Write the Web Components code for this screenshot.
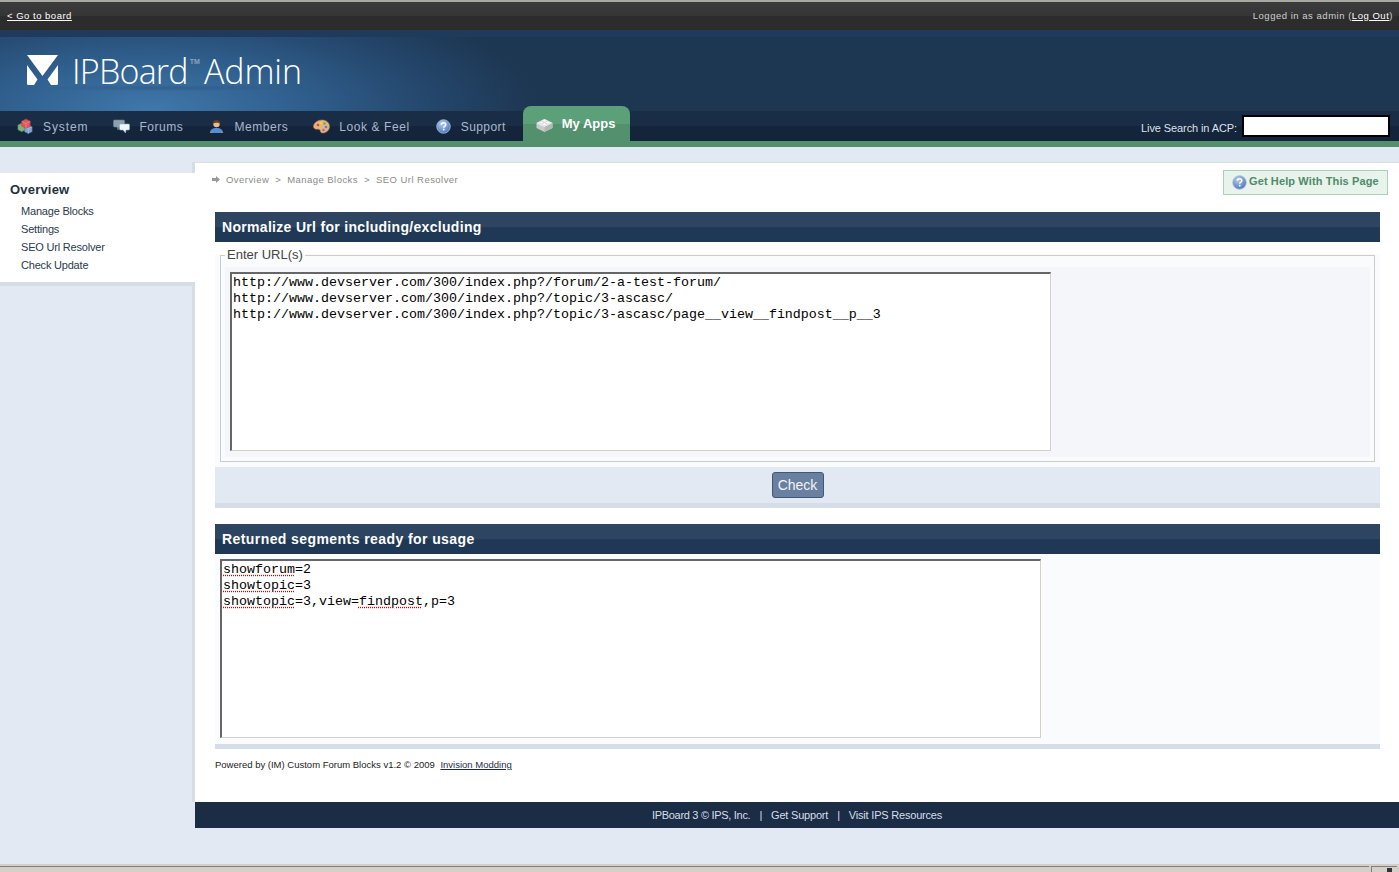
<!DOCTYPE html>
<html>
<head>
<meta charset="utf-8">
<title>IPBoard Admin</title>
<style>
  html, body { margin: 0; height: 100%; overflow: hidden; }
  body { background: #e3e9f2; font-family: "Liberation Sans", Arial, sans-serif; }
  acp-page { height: 872px; }
</style>
</head>
<body>
<acp-page>
  <acp-topbar slot="top"></acp-topbar>
  <acp-banner slot="top"></acp-banner>
  <acp-nav slot="top"></acp-nav>

  <acp-sidebar slot="side" heading="Overview">
    <a href="#">Manage Blocks</a>
    <a href="#">Settings</a>
    <a href="#">SEO Url Resolver</a>
    <a href="#">Check Update</a>
  </acp-sidebar>

  <acp-crumbs slot="main"></acp-crumbs>

  <acp-section slot="main" heading="Normalize Url for including/excluding" first>
    <acp-fieldset legend="Enter URL(s)">
      <acp-box>http://www.devserver.com/300/index.php?/forum/2-a-test-forum/
http://www.devserver.com/300/index.php?/topic/3-ascasc/
http://www.devserver.com/300/index.php?/topic/3-ascasc/page__view__findpost__p__3</acp-box>
    </acp-fieldset>
    <acp-submit label="Check"></acp-submit>
  </acp-section>

  <acp-section slot="main" heading="Returned segments ready for usage">
    <acp-results>
      <acp-box><u>showforum</u>=2
<u>showtopic</u>=3
<u>showtopic</u>=3,view=<u>findpost</u>,p=3</acp-box>
    </acp-results>
  </acp-section>

  <acp-powered slot="main"></acp-powered>
  <acp-footer slot="foot"></acp-footer>
  <acp-statusbar slot="bottom"></acp-statusbar>
</acp-page>

<script>
// small helper so every element does the same shadow setup
function define(name, html, setup) {
  customElements.define(name, class extends HTMLElement {
    connectedCallback() {
      if (this.shadowRoot) return;
      this.attachShadow({ mode: 'open' });
      this.shadowRoot.innerHTML = typeof html === 'function' ? html(this) : html;
      if (setup) setup(this);
    }
  });
}

const ICONS = {
  system: `<svg width="18" height="16" viewBox="0 0 18 16">
    <path d="M1 7l4-2 4 2v5l-4 2-4-2z" fill="#7fb07f" stroke="#5b8a5c" stroke-width=".6"/>
    <path d="M8 9l4-2 4 2v5l-4 2-4-2z" fill="#7ea6cc" stroke="#56789c" stroke-width=".6"/>
    <path d="M8 9l4 2 4-2M12 11v5" fill="none" stroke="#a9c6e2" stroke-width=".6"/>
    <path d="M5 3l4.500-2.500 4.500 2.500v5l-4.500 2.500-4.500-2.500z" fill="#e2555a" stroke="#b83c42" stroke-width=".6"/>
    <path d="M5 3l4.500 2.500 4.500-2.500M9.500 5.500v5" fill="none" stroke="#f4a0a0" stroke-width=".6"/>
  </svg>`,
  forums: `<svg width="17" height="15" viewBox="0 0 17 15">
    <path d="M1.500 1h9a1 1 0 0 1 1 1v5a1 1 0 0 1-1 1H6l-1 3-1-3H1.500a1 1 0 0 1-1-1V2a1 1 0 0 1 1-1z" fill="#8e9fb0" stroke="#6c7d8e" stroke-width=".6"/>
    <path d="M7.500 5h8a1 1 0 0 1 1 1v4a1 1 0 0 1-1 1H13l-.5 3-2.500-3H7.500a1 1 0 0 1-1-1V6a1 1 0 0 1 1-1z" fill="#eef5fb" stroke="#8fb0cf" stroke-width=".6"/>
  </svg>`,
  members: `<svg width="15" height="15" viewBox="0 0 15 15">
    <path d="M1 14c0-3.500 2.500-5 6.500-5s6.500 1.500 6.500 5z" fill="#4e8fdc"/>
    <path d="M.5 14h3v-2zM14.500 14h-3v-2z" fill="#c9824a"/>
    <circle cx="7.500" cy="5" r="3.200" fill="#edbb8e"/>
    <path d="M4 4.500C4 1.500 6 1 7.500 1S11 1.800 11 4.500C9.500 3.500 6 3.300 4 4.500z" fill="#6b3f1d"/>
  </svg>`,
  palette: `<svg width="17" height="15" viewBox="0 0 17 15">
    <path d="M9 1c4 0 7.500 2.500 7.500 6.500S13 14 9.500 14c-2 0-2-1.500-2.500-3-.4-1-2-.8-3.500-.8C2 10.200.5 9.500.5 7.500.5 4 4.500 1 9 1z" fill="#e8b27c" stroke="#b47a45" stroke-width=".6"/>
    <circle cx="5" cy="6" r="1.300" fill="#d9473f"/>
    <circle cx="8" cy="4" r="1.300" fill="#f0d040"/>
    <circle cx="11.500" cy="4.500" r="1.300" fill="#5ab55a"/>
    <circle cx="13" cy="8" r="1.300" fill="#4a86d8"/>
    <circle cx="10.500" cy="11" r="1.300" fill="#a765c0"/>
  </svg>`,
  help: `<svg width="15" height="15" viewBox="0 0 15 15">
    <defs><radialGradient id="h" cx=".4" cy=".3" r=".8"><stop offset="0" stop-color="#b6cdf0"/><stop offset="1" stop-color="#3f6fb5"/></radialGradient></defs>
    <circle cx="7.500" cy="7.500" r="6.800" fill="url(#h)" stroke="#a9bedd" stroke-width=".8"/>
    <path d="M5.300 5.800c0-1.300 1-2 2.300-2s2.200.8 2.200 1.900c0 1.500-2 1.500-2 3" fill="none" stroke="#fff" stroke-width="1.500"/>
    <rect x="6.900" y="9.800" width="1.600" height="1.600" fill="#fff"/>
  </svg>`,
  brick: `<svg width="17" height="15" viewBox="0 0 17 15">
    <path d="M.5 6l8-4 8 4v5l-8 4-8-4z" fill="#c9cdca"/>
    <path d="M.5 6l8 4 8-4-8-4z" fill="#f1f2f1"/>
    <path d="M8.500 10v5l8-4V6z" fill="#b3b8b5"/>
    <ellipse cx="5.500" cy="5.500" rx="2" ry="1.200" fill="#fff" stroke="#bbb" stroke-width=".4"/>
    <ellipse cx="11.500" cy="5.500" rx="2" ry="1.200" fill="#fff" stroke="#bbb" stroke-width=".4"/>
    <ellipse cx="8.500" cy="3.800" rx="2" ry="1.200" fill="#fff" stroke="#bbb" stroke-width=".4"/>
    <ellipse cx="8.500" cy="7.200" rx="2" ry="1.200" fill="#fff" stroke="#bbb" stroke-width=".4"/>
  </svg>`
};

define('acp-page', `
  <style>
    :host { display: flex; flex-direction: column; }
    .row { display: flex; align-items: flex-start; padding-top: 15px; }
    .side { flex: 0 0 195px; }
    .right { flex: 1; min-width: 0; }
    .main { background: #fff; border-top: 1px solid #d5dde5; height: 640px; box-sizing: border-box; padding: 0 19px 0 20px; }
    .bottom { margin-top: auto; }
  </style>
  <slot name="top"></slot>
  <div class="row">
    <div class="side"><slot name="side"></slot></div>
    <div class="right">
      <div class="main"><slot name="main"></slot></div>
      <slot name="foot"></slot>
    </div>
  </div>
  <div class="bottom"><slot name="bottom"></slot></div>
`);

define('acp-topbar', `
  <style>
    :host { display: flex; justify-content: space-between; align-items: center;
      padding: 0 6px 2px 7px; height: 26px; border-top: 2px solid #a9a9a4;
      background: linear-gradient(#3b3b3b, #353535 50%, #2c2c2c 52%, #2c2c2c);
      font-size: 9.500px; color: #cfcfcf; }
    a { color: #fff; }
    .back { letter-spacing: .5px; }
    span { letter-spacing: .52px; }
  </style>
  <a class="back" href="#">&lt; Go to board</a>
  <span>Logged in as admin (<a href="#">Log Out</a>)</span>
`);

define('acp-banner', `
  <style>
    :host { display: flex; align-items: flex-start; box-sizing: border-box; height: 81px;
      border-top: 7px solid #1f3b5b; padding: 18px 0 0 27px;
      background: radial-gradient(ellipse 130px 3px at 165px 51px, rgba(20,45,80,.22), transparent),
        radial-gradient(ellipse 390px 130px at 150px 72px, #3f78ab 0%, #2f5e8c 40%, #25486e 70%, #1d3651 100%), #1d3651; }
    svg { flex: none; }
    .word { font-family: "Open Sans", sans-serif; font-weight: 300; font-size: 34px; line-height: 32px;
      color: #fff; margin-left: 14px; white-space: nowrap; letter-spacing: -.2px; }
    .ip { letter-spacing: -.77px; }
    .tm { font-size: 7px; color: #8ea5bd; vertical-align: 20px; letter-spacing: 0; margin: 0 4px 0 2px; font-family: "Liberation Sans", sans-serif; font-weight: 700; line-height: 0; }
    .ad { letter-spacing: -.1px; }
  </style>
  <svg width="31" height="30" viewBox="0 0 31 30">
    <path d="M0 0h31L15.500 21z" fill="#fff"/>
    <path d="M0 10l10.500 14.500L7 30H1.500Q0 30 0 28.500zM31 10L20.500 24.500 24 30h5.500Q31 30 31 28.500z" fill="#fff"/>
  </svg>
  <div class="word"><span class="ip">IPBoard</span><span class="tm">TM</span><span class="ad">Admin</span></div>
`);

define('acp-nav-item', host => `
  <style>
    :host { display: flex; align-items: center; gap: 9px; color: #a9b9cd; font-size: 12px;
      letter-spacing: var(--ls, .6px); white-space: nowrap; height: 30px; }
    .tx { padding-top: 1px; }
    :host([active]) { height: 35px; margin-top: -5px; padding: 0 15px 0 13px; gap: 9px;
      border-radius: 8px 8px 0 0; color: #fff; font-weight: 700; font-size: 13px; letter-spacing: 0;
      background: linear-gradient(#5ba078, #5ba078 50%, #53906e 52%, #53906e); align-items: flex-start; }
    :host([active]) .ic { margin-top: 11px; }
    :host([active]) .tx { margin-top: 10px; padding-top: 0; }
    .ic { display: flex; width: 17px; justify-content: center; }
  </style>
  <span class="ic">${ICONS[host.getAttribute('icon')]}</span><span class="tx"><slot></slot></span>
`);

define('acp-nav', `
  <style>
    :host { display: flex; align-items: center; height: 36px; box-sizing: border-box; border-bottom: 6px solid #53906e;
      padding: 0 9px 0 17px; background: linear-gradient(#1a2d46, #1a2d46 50%, #14243a 52%, #14243a); }
    .items { display: flex; gap: 25px; }
    .search { margin-left: auto; display: flex; align-items: center; gap: 5px; color: #dbe3ec; font-size: 11px; letter-spacing: -.1px; margin-top: 2px; }
    .search span { padding-top: 2px; }
    .input { width: 144px; height: 18px; background: #fff; border: 2px solid #000; margin-top: -2px; }
    .act { margin-left: -8px; }
  </style>
  <div class="items">
    <acp-nav-item icon="system" style="--ls:.9px">System</acp-nav-item>
    <acp-nav-item icon="forums" style="--ls:.55px">Forums</acp-nav-item>
    <acp-nav-item icon="members" style="--ls:.55px">Members</acp-nav-item>
    <acp-nav-item icon="palette" style="--ls:.58px">Look &amp; Feel</acp-nav-item>
    <acp-nav-item icon="help" style="--ls:.42px">Support</acp-nav-item>
    <acp-nav-item icon="brick" active class="act">My Apps</acp-nav-item>
  </div>
  <div class="search"><span>Live Search in ACP:</span><div class="input"></div></div>
`);

define('acp-sidebar', host => `
  <style>
    :host { display: block; height: 640px; padding-top: 11px; box-sizing: border-box;
      background: linear-gradient(to right, transparent 192px, #d5dde5 192px) no-repeat; }
    .box { background: #fff; border-bottom: 4px solid #d5dde5; height: 113px; box-sizing: border-box; }
    h3 { margin: 0; padding: 9px 0 0 10px; font-size: 13px; line-height: 15px; color: #22303f; letter-spacing: .2px; }
    .links { display: flex; flex-direction: column; padding: 5px 0 0 21px; }
    ::slotted(a) { font-size: 11px; line-height: 18px; color: #2b3a4d; text-decoration: none; letter-spacing: -.2px; }
  </style>
  <div class="box">
    <h3>${host.getAttribute('heading')}</h3>
    <div class="links"><slot></slot></div>
  </div>
`);

define('acp-crumbs', `
  <style>
    :host { display: flex; justify-content: space-between; align-items: flex-start; height: 49px;
      margin-right: -8px; margin-left: -3px; box-sizing: border-box; padding-top: 7px; }
    .trail { display: flex; align-items: center; gap: 6px; color: #8a8a8a; font-size: 9.500px; letter-spacing: .45px; height: 19px; }
    .help { display: flex; align-items: center; gap: 2px; box-sizing: border-box; height: 25px; width: 165px; padding-left: 8px;
      border: 1px solid #a9d2ba; background: #e8f3ec; color: #4f8a69; font-size: 11px; font-weight: 700; letter-spacing: .12px; white-space: nowrap; }
    .help span { margin-bottom: 4px; }
    .help svg { margin-bottom: 1px; }
  </style>
  <div class="trail">
    <svg width="8" height="7" viewBox="0 0 8 7"><path d="M0 2h4V0l4 3.500L4 7V5H0z" fill="#999"/></svg>
    <span>Overview</span><span>&gt;</span><span>Manage Blocks</span><span>&gt;</span><span>SEO Url Resolver</span>
  </div>
  <div class="help">${ICONS.help}<span>Get Help With This Page</span></div>
`);

define('acp-section', host => `
  <style>
    :host { display: block; }
    :host(:not([first])) { margin-top: 16px; }
    h2 { margin: 0; height: 30px; padding-left: 7px; font-size: 14px; line-height: 30px; color: #fff;
      letter-spacing: .42px; background: linear-gradient(#2d4560, #2d4560 50%, #1e3855 52%, #1e3855); }
    :host([first]) h2 { letter-spacing: .31px; }
  </style>
  <h2>${host.getAttribute('heading')}</h2>
  <slot></slot>
`);

define('acp-fieldset', host => `
  <style>
    :host { display: block; padding: 5px 0; background: linear-gradient(#fff 12px, #fafbfc 12px); }
    fieldset { margin: 0 5px; padding: 0 4px 4px; border: 1px solid #ccc; height: 215px; box-sizing: border-box; }
    legend { padding: 0 2px; margin-left: 0; font-size: 13px; line-height: 16px; color: #444; }
    .in { background: #f4f6f9; height: 190px; box-sizing: border-box; padding: 5px; margin-top: 4px; }
  </style>
  <fieldset>
    <legend>${host.getAttribute('legend')}</legend>
    <div class="in"><slot></slot></div>
  </fieldset>
`);

define('acp-box', `
  <style>
    :host { display: block; width: 821px; height: 179px; box-sizing: border-box; overflow: hidden;
      padding: 1px 1px; background: #fff; color: #000;
      border: 2px solid #d4d0c8; border-width: 2px 1px 1px 2px;
      border-color: #666 #d4d0c8 #d4d0c8 #666;
      font-family: "Liberation Mono", "Courier New", monospace; font-size: 13.333px; line-height: 16px; }
    .t { white-space: pre; }
    ::slotted(u) { text-decoration: underline dotted #e00000; text-underline-offset: 2px; }
  </style>
  <div class="t"><slot></slot></div>
`);

define('acp-submit', host => `
  <style>
    :host { display: flex; justify-content: center; box-sizing: border-box; height: 41px; padding-top: 5px;
      background: #e3e9f2; border-bottom: 5px solid #d5dde6; }
    button { width: 52px; height: 26px; padding: 0; border: 1px solid #3f5877; border-radius: 3px; background: #6a80a0;
      color: #f0f4f8; font: 14px "Liberation Sans", sans-serif; }
  </style>
  <button type="button">${host.getAttribute('label')}</button>
`);

define('acp-results', `
  <style>
    :host { display: block; height: 190px; box-sizing: border-box; padding: 5px; background: #f9fbfc; }
  </style>
  <slot></slot>
`);

define('acp-powered', `
  <style>
    :host { display: block; border-top: 5px solid #d5dde6; padding-top: 10px; font-size: 9.500px; line-height: 12px; color: #222; }
    a { color: #1b2d44; margin-left: 3px; }
  </style>
  Powered by (IM) Custom Forum Blocks v1.2 &copy; 2009 <a href="#">Invision Modding</a>
`);

define('acp-footer', `
  <style>
    :host { display: flex; justify-content: center; align-items: center; gap: 9px; height: 26px; background: #1b2d44; color: #d6deea; font-size: 11px; letter-spacing: -.2px; white-space: nowrap; }
    .first { letter-spacing: -.3px; }
  </style>
  <span class="first">IPBoard 3 &copy; IPS, Inc.</span><span>|</span><span>Get Support</span><span>|</span><span>Visit IPS Resources</span>
`);

define('acp-statusbar', `
  <style>
    :host { display: flex; height: 8px; box-sizing: border-box; background: #d4d0c8; padding-top: 2px; padding-right: 2px; gap: 2px; }
    .cell { flex: 1; border-top: 1px solid #808080; }
    .end { flex: 0 0 25px; border-top: 1px solid #808080; border-left: 1px solid #808080; }
    .end i { display: block; width: 5px; height: 5px; background: #333; margin: 1px 0 0 15px; }
  </style>
  <div class="cell"></div><div class="end"><i></i></div>
`);
</script>
</body>
</html>
